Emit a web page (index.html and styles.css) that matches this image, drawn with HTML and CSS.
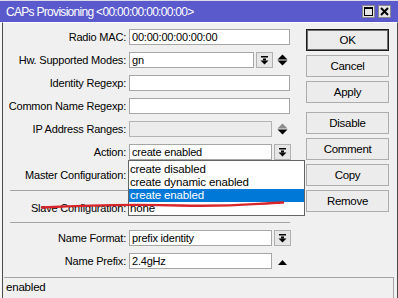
FILE: index.html
```html
<!DOCTYPE html>
<html>
<head>
<meta charset="utf-8">
<link rel="stylesheet" href="styles.css">
</head>
<body>
<div class="win">
  <div class="titlebar">
    <span class="title">CAPs Provisioning &lt;00:00:00:00:00:00&gt;</span>
    <div class="tbtns">
      <span class="tbtn"><svg width="11" height="11" viewBox="0 0 11 11"><rect x="1.5" y="1.5" width="8" height="8" fill="none" stroke="#000" stroke-width="1"/><rect x="1" y="1" width="9" height="2" fill="#000"/></svg></span>
      <span class="tbtn"><svg width="11" height="11" viewBox="0 0 11 11"><path d="M2 2L9 9M9 2L2 9" stroke="#000" stroke-width="2"/></svg></span>
    </div>
  </div>
  <div class="body">
    <div class="main">
      <div class="form">
        <div class="row"><label class="lbl">Radio MAC:</label><div class="inp w-full">00:00:00:00:00:00</div></div>
        <div class="row"><label class="lbl">Hw. Supported Modes:</label><div class="inp w-hw">gn</div>
          <span class="ddb"><svg width="9" height="9" viewBox="0 0 9 9"><rect x="1" y="0" width="7" height="1.5"/><rect x="3" y="2.5" width="3" height="2"/><path d="M0.5 4.5H8.5L4.5 8.5Z"/></svg></span>
          <span class="ud ud-hw"><svg width="11" height="12" viewBox="0 0 11 12"><path d="M5.5 0.5L10.5 5.5H0.5Z"/><path d="M0.5 6.5H10.5L5.5 11.5Z"/></svg></span>
        </div>
        <div class="row"><label class="lbl">Identity Regexp:</label><div class="inp w-full"></div></div>
        <div class="row"><label class="lbl">Common Name Regexp:</label><div class="inp w-full"></div></div>
        <div class="row"><label class="lbl">IP Address Ranges:</label><div class="inp w-mid dis"></div>
          <span class="ud ud-ip"><svg width="11" height="12" viewBox="0 0 11 12"><path d="M5.5 0.5L10.5 5.5H0.5Z" fill="#8c8c8c"/><path d="M0.5 6.5H10.5L5.5 11.5Z"/></svg></span>
        </div>
        <div class="row"><label class="lbl">Action:</label>
          <div class="inp w-mid anchor">create enabled
            <ul class="list">
              <li>create disabled</li>
              <li>create dynamic enabled</li>
              <li class="sel">create enabled</li>
              <li>none</li>
            </ul>
          </div>
          <span class="ddb"><svg width="9" height="9" viewBox="0 0 9 9"><rect x="1" y="0" width="7" height="1.5"/><rect x="3" y="2.5" width="3" height="2"/><path d="M0.5 4.5H8.5L4.5 8.5Z"/></svg></span>
        </div>
        <div class="row"><label class="lbl">Master Configuration:</label><div class="inp w-mid"></div><span class="ddb"></span></div>
        <div class="sep sep1"></div>
        <div class="row row-slave"><label class="lbl">Slave Configuration:</label><div class="inp w-mid"></div></div>
        <div class="sep sep2"></div>
        <div class="row row-nf"><label class="lbl">Name Format:</label><div class="inp w-mid">prefix identity</div>
          <span class="ddb"><svg width="9" height="9" viewBox="0 0 9 9"><rect x="1" y="0" width="7" height="1.5"/><rect x="3" y="2.5" width="3" height="2"/><path d="M0.5 4.5H8.5L4.5 8.5Z"/></svg></span>
        </div>
        <div class="row"><label class="lbl">Name Prefix:</label><div class="inp w-mid">2.4gHz</div>
          <span class="ud ud-ip"><svg width="11" height="12" viewBox="0 0 11 12"><path d="M5.5 5L10 10H1Z"/></svg></span>
        </div>
      </div>
      <div class="buttons">
        <button class="btn def">OK</button>
        <button class="btn">Cancel</button>
        <button class="btn">Apply</button>
        <button class="btn gap">Disable</button>
        <button class="btn">Comment</button>
        <button class="btn">Copy</button>
        <button class="btn">Remove</button>
      </div>
    </div>
    <div class="status">enabled</div>
  </div>
  <svg class="redline" width="398" height="298" viewBox="0 0 398 298"><path d="M42 207.5C90 205 130 204 180 205.5S250 204 283 202.5" fill="none" stroke="#d7262b" stroke-width="2.4" stroke-linecap="round"/></svg>
</div>
</body>
</html>
```
FILE: styles.css
```css
* { box-sizing: border-box; }
html, body { margin: 0; padding: 0; }
body {
  width: 398px; height: 298px; overflow: hidden;
  background: #f7f7f7;
  font-family: "Liberation Sans", Arial, sans-serif;
  font-size: 11px; letter-spacing: -0.2px; color: #000;
}
.win { position: relative; width: 398px; height: 298px; display: flex; flex-direction: column; }
.titlebar {
  height: 22px; flex: none; background: #5a5acd;
  border-top: 1px solid #dcdce8;
  display: flex; align-items: center; justify-content: space-between;
  padding: 0 7px 0 6px;
}
.title { color: #fff; font-size: 12px; letter-spacing: -0.7px; }
.tbtns { display: flex; gap: 3px; }
.tbtn {
  width: 13px; height: 13px; background: #e4e4e4; border: 1px solid #8a8a8a;
  display: flex; align-items: center; justify-content: center;
}
.body {
  flex: 1; display: flex; flex-direction: column;
  margin-left: 2px; background: #f0f0f0;
  border-left: 1px solid #4a4a4a; border-right: 1px solid #4a4a4a;
  border-top: 1px solid #fff;
}
.main { flex: 1; display: flex; padding-top: 6px; }
.form { width: 303px; }
.row { display: flex; align-items: center; height: 16px; margin-bottom: 7px; position: relative; }
.lbl { width: 126px; text-align: right; padding-right: 3px; white-space: nowrap; }
.inp {
  height: 16px; background: #fff; border: 1px solid #a6a6a6;
  padding-left: 2px; line-height: 14px; white-space: nowrap;
}
.w-full { width: 161px; }
.w-hw { width: 125px; }
.w-mid { width: 143px; }
.dis { background: #ececec; border-color: #b4b4b4; }
.ddb {
  width: 17px; height: 16px; margin-left: 2px;
  background: #e6e6e6; border: 1px solid #b0b0b0;
  display: flex; align-items: center; justify-content: center;
}
.ud { display: flex; align-items: center; }
.ud-hw { margin-left: 4px; }
.ud-ip { margin-left: 5px; }
.anchor { position: relative; }
.list {
  position: absolute; left: -2px; top: 15px; width: 177px; height: 56px;
  margin: 0; padding: 2px 0 0 0; list-style: none;
  background: #fff; border: 1px solid #646464; z-index: 5;
}
.list li { height: 13px; line-height: 13px; padding-left: 1px; font-size: 11.5px; letter-spacing: -0.15px; }
.list li.sel { background: #0078d7; color: #fff; }
.sep { height: 1px; background: #a4a4a4; width: 280px; margin-left: 7px; }
.sep1 { margin-top: 0; }
.row-slave { margin-top: 9px; margin-bottom: 6px; }
.row-nf { margin-top: 7px; }
.buttons { width: 83px; display: flex; flex-direction: column; gap: 4px; }
.btn {
  height: 22px; width: 83px; padding: 0; margin: 0;
  background: #ececec; border: 1px solid #adadad;
  font-family: "Liberation Sans", Arial, sans-serif; font-size: 11.5px; letter-spacing: -0.3px; color: #000;
}
.btn.def { border: 1px solid #1a1a1a; box-shadow: inset 0 0 0 1px #6e6e6e; }
.btn.gap { margin-top: 5px; }
.status {
  height: 21px; flex: none; margin-left: 1px; margin-right: 3px;
  border-top: 1px solid #a4a4a4; border-right: 1px solid #a4a4a4;
  padding-left: 2px; line-height: 19px; font-size: 11.5px;
}
.redline { position: absolute; left: 0; top: 0; z-index: 10; pointer-events: none; }
```
